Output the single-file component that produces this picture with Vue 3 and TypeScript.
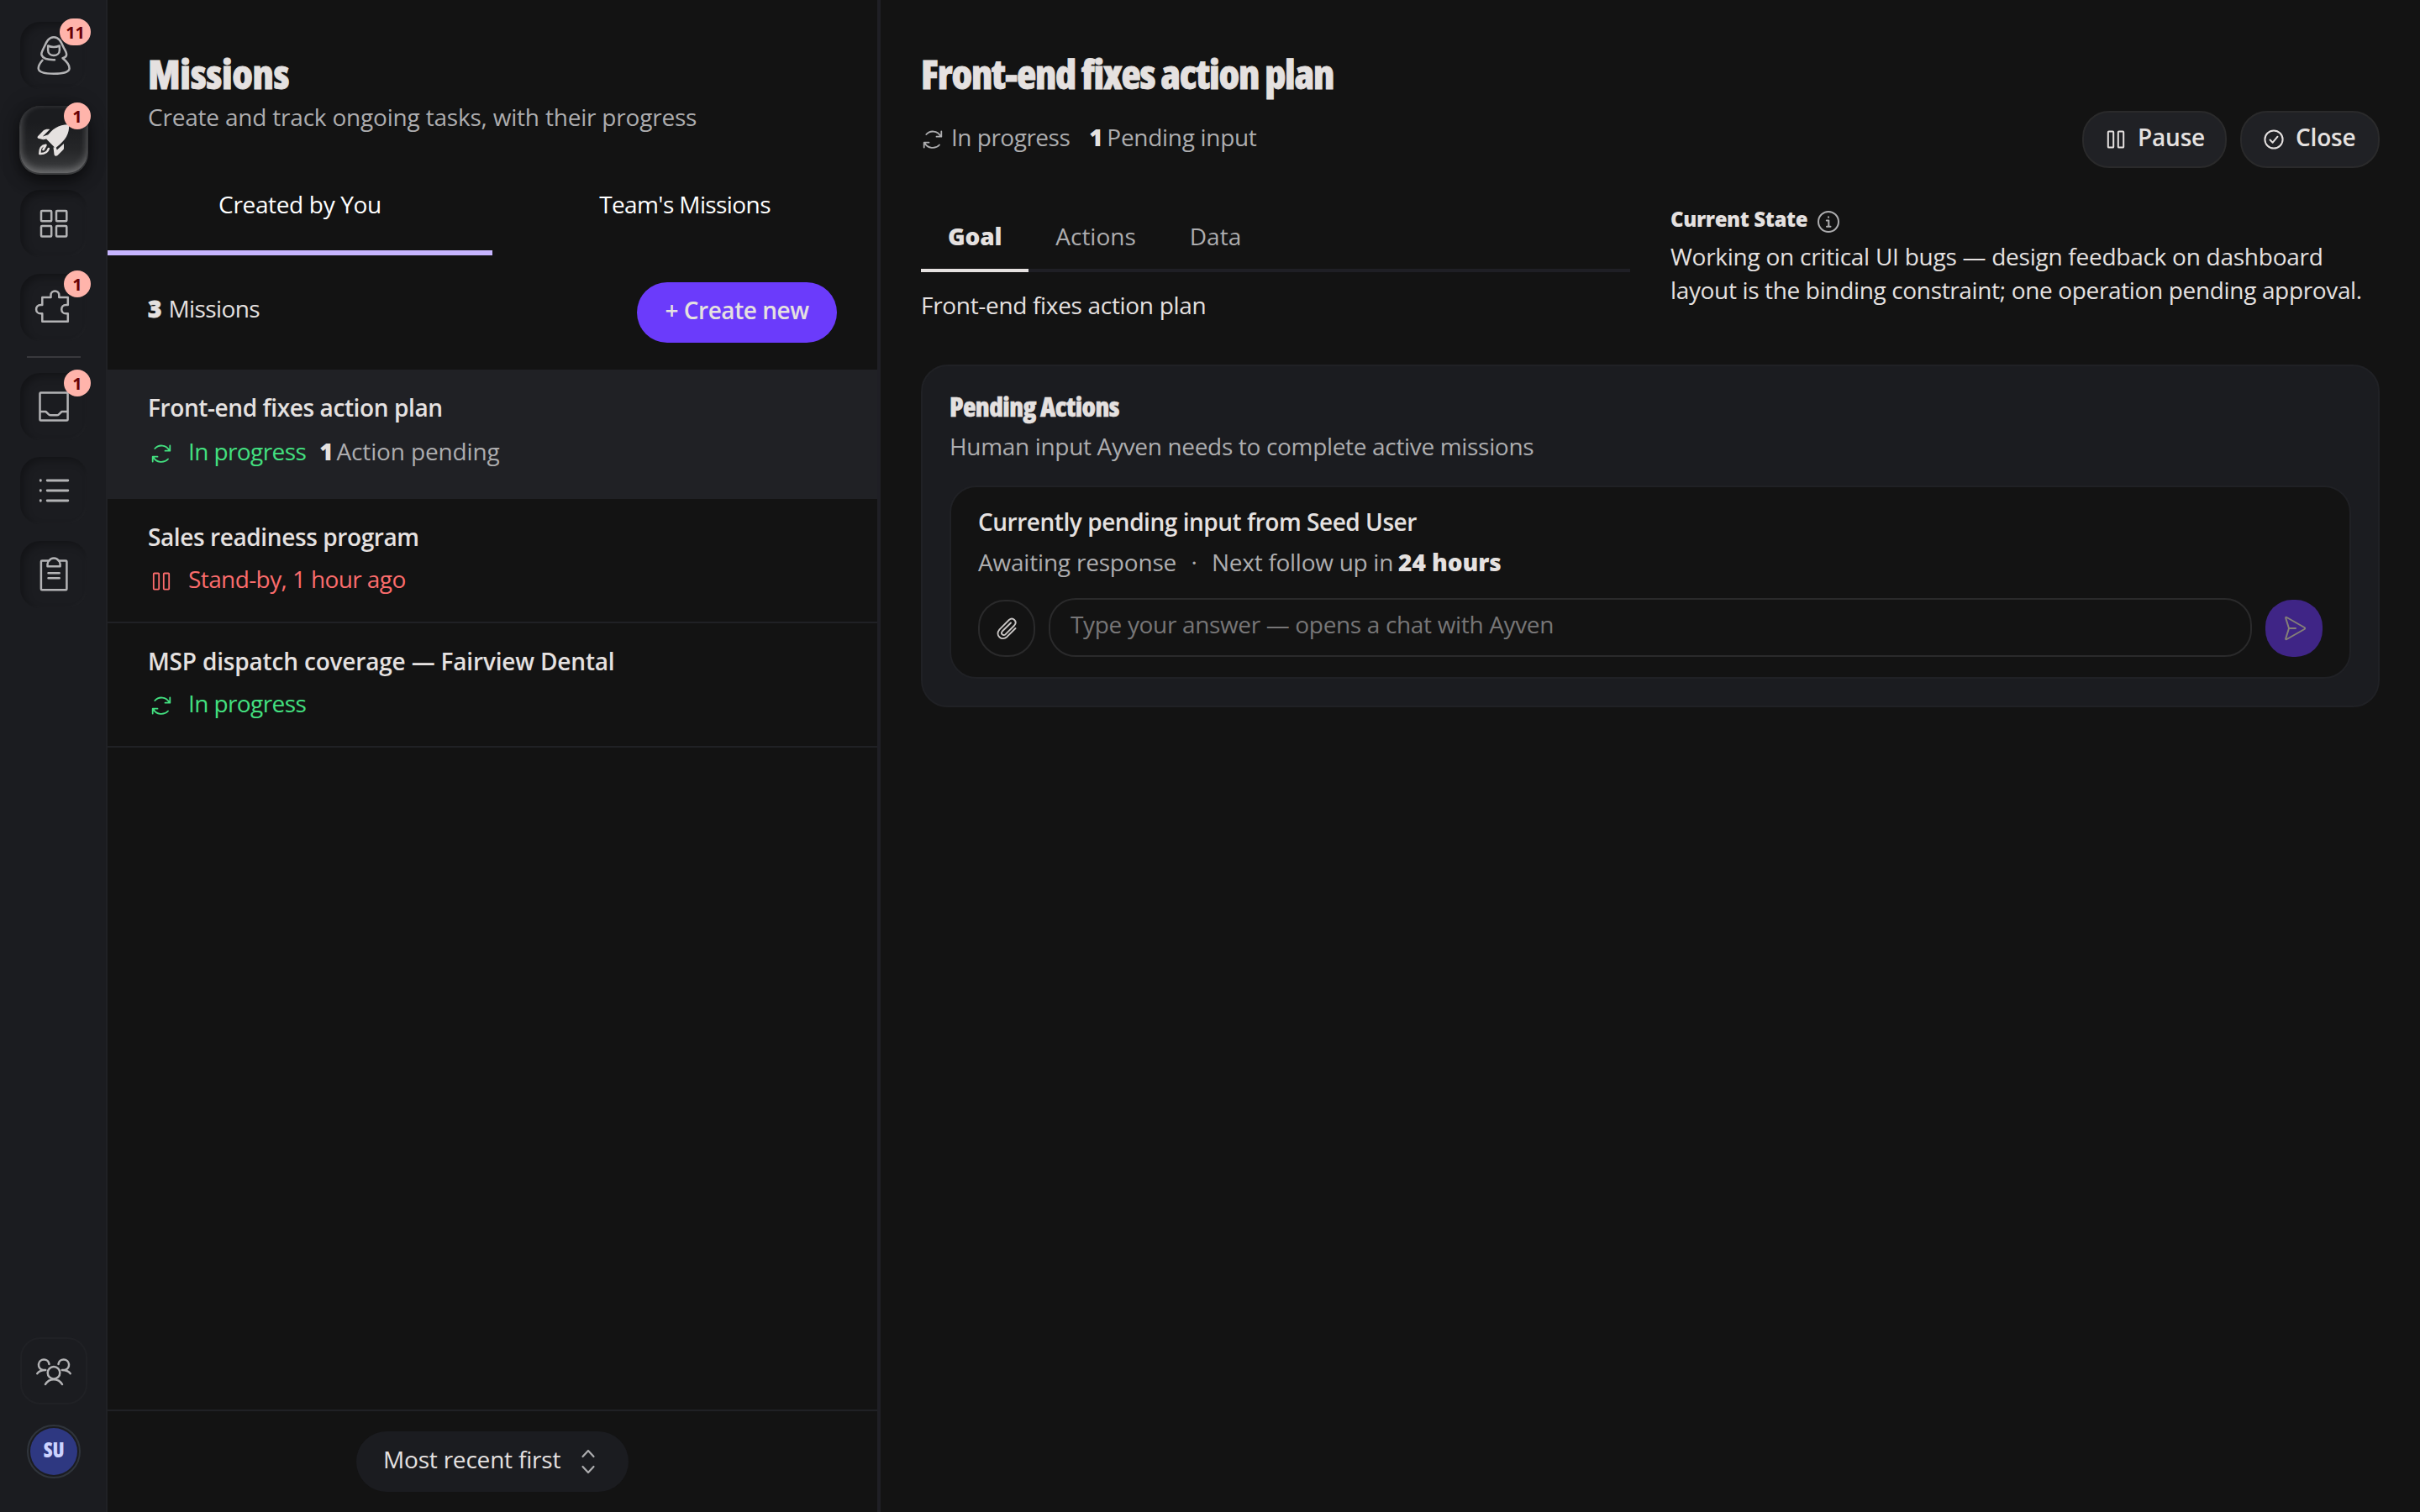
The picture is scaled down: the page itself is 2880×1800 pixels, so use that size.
<script setup lang="ts">
interface NavItem {
  id: string
  badge?: string
  active?: boolean
}

interface Mission {
  title: string
  status: string
  state: 'running' | 'standby'
  pending?: number
}

const primaryNav: NavItem[] = [
  { id: 'agent', badge: '11' },
  { id: 'missions', badge: '1', active: true },
  { id: 'apps' },
  { id: 'integrations', badge: '1' },
]

const secondaryNav: NavItem[] = [
  { id: 'inbox', badge: '1' },
  { id: 'list' },
  { id: 'clipboard' },
]

const icons: Record<string, string> = {
  agent:
    'M41 45.2C33 45.4 27 43.5 25.5 39.5C24.6 36.5 27 33.6 28.8 29.5C31.3 23.6 34 18.2 40 18.2S48.700 23.600 51.200 29.500C53 33.600 56 37 55 40C54.200 42 52.500 42.800 50.500 43.300C54.500 46.500 58.700 51.500 58.600 55.500C58.400 60 49.500 61.800 40 61.800S21.800 60 21.700 55.300C21.600 51.500 24.500 48 26.500 45.700 M33.200 28.500C37.500 30.300 42.500 30.300 46.800 28.500L46.900 33.500C46.900 37.800 43.500 40 40 40S33.100 37.800 33.100 33.500Z',
  apps: 'M26 24.900H36.200Q37.200 24.900 37.200 25.900V36.200Q37.200 37.200 36.200 37.200H26Q25 37.200 25 36.200V25.900Q25 24.900 26 24.900ZM44 24.900H54.200Q55.300 24.900 55.300 25.900V36.200Q55.300 37.200 54.200 37.200H44Q43 37.200 43 36.200V25.900Q43 24.900 44 24.900ZM26 43H36.200Q37.200 43 37.200 44V54.400Q37.200 55.400 36.200 55.400H26Q25 55.400 25 54.400V44Q25 43 26 43ZM44 43H54.200Q55.300 43 55.300 44V54.400Q55.300 55.400 54.200 55.400H44Q43 55.400 43 54.400V44Q43 43 44 43Z',
  integrations:
    'M26.300 28H36.500V25.300C36.500 18.800 46.300 18.800 46.300 25.300V28H56.800V37H54.500C47.500 37 47.500 47.300 54.500 47.300H56.800V56.800H26.300V47.300H24.500C17.300 47.300 17.300 37 24.500 37H26.300Z',
  inbox:
    'M24.500 23.500H55.500Q56.600 23.500 56.600 24.500V55.500Q56.600 56.600 55.500 56.600H24.500Q23.500 56.600 23.500 55.500V24.500Q23.500 23.500 24.500 23.500ZM23.500 46H30.500L34 49.300Q35 50.300 36.300 50.300H43.700Q45 50.300 46 49.300L49.500 46H56.500',
  list: 'M32.200 28H56.800M32.200 40H56.800M32.200 52H56.800M24.300 27.700V28.300M24.300 39.700V40.300M24.300 51.700V52.300',
  clipboard:
    'M34 23.400H26Q24.900 23.400 24.900 24.400V57.200Q24.900 58.200 26 58.200H54.300Q55.400 58.200 55.400 57.200V24.400Q55.400 23.400 54.300 23.400H46.200M32.500 30.200V27.500Q32.500 24.800 34.800 23.300C36.500 19.500 43.700 19.500 45.400 23.300Q47.600 24.800 47.600 27.500V30.200ZM33.500 38.300H46.700M33.500 44.300H46.700',
  team: 'M47.300 42.300A7.300 7.300 0 1 1 32.700 42.300A7.300 7.300 0 1 1 47.300 42.300M30 56C34.500 48.200 45.500 48.200 50 56M34.500 32A6.300 6.300 0 1 0 27 38.900L30.200 38.900C26 38.900 22 40.500 20.300 43.200M45.500 32A6.300 6.300 0 1 1 53 38.900L49.800 38.900C54 38.900 58 40.500 59.700 43.200',
}

const refreshPath =
  'M8.300 10C13 4.800 21.500 5.300 25.700 12.300M26.300 6.500V12.700H20.500M5.700 25.500V19.700H11.500M6.300 20C10 27 19 27.800 24 22.500'
const pausePath =
  'M7.700 6.500H12.300Q13.200 6.500 13.200 7.400V24.700Q13.200 25.600 12.300 25.600H7.700Q6.800 25.600 6.800 24.700V7.400Q6.800 6.500 7.700 6.500ZM19.700 6.500H24.300Q25.200 6.500 25.200 7.400V24.700Q25.200 25.600 24.300 25.600H19.700Q18.800 25.600 18.800 24.700V7.400Q18.800 6.500 19.700 6.500Z'

const missions: Mission[] = [
  { title: 'Front-end fixes action plan', status: 'In progress', state: 'running', pending: 1 },
  { title: 'Sales readiness program', status: 'Stand-by, 1 hour ago', state: 'standby' },
  { title: 'MSP dispatch coverage — Fairview Dental', status: 'In progress', state: 'running' },
]
</script>

<template>
  <div class="app">
    <aside class="rail">
      <nav class="rail-group">
        <button v-for="item in primaryNav" :key="item.id" class="tile" :class="{ active: item.active }">
          <svg v-if="item.id === 'missions'" class="tile-icon" viewBox="0 0 80 80">
            <g fill="#e5e1e0">
              <path d="M58 22.300C59 33 54 41 43 49.500C42.300 50 41.800 50.300 41.300 49.800L31.200 39.500C30.500 38.800 30.500 38.200 31 37.500C38 27.500 46 22 58 22.300Z" />
              <path d="M35.300 28L27 36.300L27.500 40.200L21.500 38.800C20.300 38.300 20.300 37 21.200 36L27.500 29.500C29.300 28 32 27.600 35.300 28Z" />
              <path d="M26.800 36.500L33.500 34.300L31 39.500L27.300 40.200Z" />
              <path d="M52 45V50.500Q51.900 51.800 51 52.600L44.500 59C43 60.300 41 60 40.500 58L39.500 49.500L42.500 49L43.800 52.500Z" />
            </g>
            <path d="M30.500 46.800C24.500 47.500 23.200 51 23.300 57C29 57.300 32.500 55.500 33.800 51M30.500 46.800L27.500 52" fill="none" stroke="#e5e1e0" stroke-width="2.600" stroke-linecap="round" stroke-linejoin="round" />
          </svg>
          <svg v-else class="tile-icon line" viewBox="0 0 80 80"><path :d="icons[item.id]" /></svg>
          <span v-if="item.badge" class="badge">{{ item.badge }}</span>
        </button>
        <hr class="rail-divider" />
        <button v-for="item in secondaryNav" :key="item.id" class="tile">
          <svg class="tile-icon line" :class="{ thick: item.id === 'list' }" viewBox="0 0 80 80"><path :d="icons[item.id]" /></svg>
          <span v-if="item.badge" class="badge">{{ item.badge }}</span>
        </button>
      </nav>
      <div class="rail-bottom">
        <button class="tile outlined">
          <svg class="tile-icon line" viewBox="0 0 80 80"><path :d="icons.team" /></svg>
        </button>
        <div class="avatar"><span>SU</span></div>
      </div>
    </aside>

    <section class="list-panel">
      <header class="list-head">
        <h1 class="title">Missions</h1>
        <p class="muted t-sub">Create and track ongoing tasks, with their progress</p>
      </header>
      <div class="list-tabs">
        <button class="list-tab selected"><span>Created by You</span></button>
        <button class="list-tab"><span class="t-team">Team's Missions</span></button>
      </div>
      <div class="list-bar">
        <p class="t-count"><b>3</b> Missions</p>
        <button class="create"><span>+ Create new</span></button>
      </div>
      <ul class="missions">
        <li v-for="(m, i) in missions" :key="m.title" class="mission" :class="{ current: i === 0 }">
          <h2 class="mission-title">{{ m.title }}</h2>
          <div class="mission-status" :class="m.state">
            <svg class="status-icon" viewBox="0 0 32 32"><path :d="m.state === 'running' ? refreshPath : pausePath" /></svg>
            <span class="status-text">{{ m.status }}</span>
            <span v-if="m.pending" class="pending"><b>{{ m.pending }}</b> Action pending</span>
          </div>
        </li>
      </ul>
      <footer class="list-foot">
        <button class="sort">
          <span>Most recent first</span>
          <svg class="sort-icon" viewBox="0 0 28 36"><path d="M7.500 12L14 5L20.500 12M7.500 24L14 31L20.500 24" /></svg>
        </button>
      </footer>
    </section>

    <main class="detail">
      <h1 class="title t-plan">Front-end fixes action plan</h1>
      <div class="detail-bar">
        <div class="detail-status">
          <svg class="status-icon" viewBox="2 0 28 32"><path :d="refreshPath" /></svg>
          <span class="t-prog">In progress</span>
          <span class="detail-pending"><b>1</b> Pending input</span>
        </div>
        <div class="detail-actions">
          <button class="pill pause">
            <svg class="pill-icon" viewBox="0 0 32 32"><path :d="pausePath" /></svg>
            <span>Pause</span>
          </button>
          <button class="pill close">
            <svg class="pill-icon" viewBox="0 0 32 32"><circle cx="16" cy="16" r="10.600" /><path d="M11.500 16.500L14.700 19.700L20.500 12.700" /></svg>
            <span>Close</span>
          </button>
        </div>
      </div>

      <div class="columns">
        <div class="column">
          <div class="tabs">
            <button class="tab selected">Goal</button>
            <button class="tab">Actions</button>
            <button class="tab">Data</button>
          </div>
          <p class="goal-text">Front-end fixes action plan</p>
        </div>
        <div class="column">
          <h3 class="state-title">
            <span>Current State</span>
            <svg class="info-icon" viewBox="0 0 32 32"><circle cx="16" cy="16" r="12" /><path d="M13.800 14.500H16.300V21.500M16 10.300V10.700M14 21.700H18.500" /></svg>
          </h3>
          <p><span class="line-a">Working on critical UI bugs — design feedback on dashboard</span><br /><span class="line-b">layout is the binding constraint; one operation pending approval.</span></p>
        </div>
      </div>

      <section class="card">
        <h2 class="card-title">Pending Actions</h2>
        <p class="muted t-human">Human input Ayven needs to complete active missions</p>
        <article class="request">
          <h3 class="request-title">Currently pending input from Seed User</h3>
          <p class="muted request-meta">
            <span>Awaiting response</span><span class="dot">·</span><span class="t-next">Next follow up in</span><b>24 hours</b>
          </p>
          <div class="reply">
            <button class="round">
              <svg class="clip" viewBox="0 0 32 36"><path d="M26.500 18L16.300 28.200C10.500 33.500 1.500 26.500 7.500 19.300L18.800 8C23.300 4.300 29.300 9.500 25.200 14.500L14.600 25.200C11.800 27.500 8.500 24.500 10.800 21.500L21 11.500" /></svg>
            </button>
            <div class="field"><span>Type your answer — opens a chat with Ayven</span></div>
            <button class="round send">
              <svg viewBox="0 0 68 68"><path d="M24.200 21.800C24 21 24.700 20.600 25.400 21L46.500 33C47.300 33.500 47.300 34.500 46.500 35L25.400 47C24.700 47.400 24 47 24.200 46.200L28 34ZM28 34H36" /></svg>
            </button>
          </div>
        </article>
      </section>
    </main>
  </div>
</template>

<style>
body {
  background: #131313;
}
</style>

<style scoped>
* {
  box-sizing: border-box;
}
h1,
h2,
h3,
p,
ul {
  margin: 0;
  padding: 0;
  list-style: none;
}
button {
  appearance: none;
  border: 0;
  padding: 0;
  background: none;
  color: inherit;
  font: inherit;
  letter-spacing: inherit;
}
svg {
  display: block;
  flex: none;
  fill: none;
  stroke: currentColor;
  stroke-linecap: round;
  stroke-linejoin: round;
}
b {
  font-weight: 800;
  color: #e5e1e0;
}
.app {
  display: flex;
  width: 2880px;
  height: 1800px;
  overflow: hidden;
  background: #131313;
  color: #e5e1e0;
  font-family: 'Open Sans', 'Noto Sans', sans-serif;
  font-size: 28px;
  line-height: 40px;
  letter-spacing: -0.2px;
  white-space: nowrap;
}

/* Navigation rail */
.rail {
  display: flex;
  flex: none;
  flex-direction: column;
  justify-content: space-between;
  align-items: center;
  width: 128px;
  padding: 26px 0 40px 2px;
  border-right: 2px solid #202125;
  background: #1b1c20;
}
.rail-group {
  display: flex;
  flex-direction: column;
  align-items: center;
  gap: 20px;
}
.rail-divider {
  width: 64px;
  height: 2px;
  margin: -2px 0;
  border: 0;
  background: #39393d;
}
.tile {
  position: relative;
  width: 80px;
  height: 80px;
  border-radius: 24px;
  color: #b3b3b5;
  box-shadow: inset 4px 4px 10px rgba(0, 0, 0, 0.3), inset -2px -2px 4px rgba(255, 255, 255, 0.02);
}
.tile.active {
  background: linear-gradient(180deg, #1b1c1f 25%, #252628 65%, #3c3d3f 100%);
  box-shadow:
    0 1px 0 1px #3a3b3d,
    0 10px 18px rgba(0, 0, 0, 0.5),
    0 0 24px rgba(0, 0, 0, 0.35),
    inset 0 -3px 8px rgba(255, 255, 255, 0.2),
    inset 0 -4px 12px rgba(255, 255, 255, 0.12);
}
.tile.outlined {
  border: 2px solid #202125;
  box-shadow: none;
}
.tile-icon {
  width: 80px;
  height: 80px;
  stroke: none;
}
.outlined .tile-icon {
  margin: -2px;
}
.tile-icon.line {
  stroke: currentColor;
  stroke-width: 2.5;
}
.tile-icon.thick {
  stroke-width: 2.9;
}
.badge {
  position: absolute;
  top: -4px;
  right: -4px;
  min-width: 32px;
  height: 32px;
  padding: 0 7px;
  border-radius: 16px;
  background: #ffb4ab;
  color: #690005;
  font: 700 20px/34px 'Open Sans', sans-serif;
  letter-spacing: 0;
  text-align: center;
}
.rail-bottom {
  display: flex;
  flex-direction: column;
  align-items: center;
  gap: 24px;
}
.avatar {
  display: flex;
  width: 64px;
  height: 64px;
  padding: 2px;
  border: 2px solid #30353c;
  border-radius: 50%;
}
.avatar span {
  flex: 1;
  border-radius: 50%;
  background: #2e3881;
  color: #ccd3ff;
  font-size: 24px;
  font-weight: 800;
  font-stretch: 75%;
  line-height: 52px;
  text-align: center;
}

/* Mission list */
.list-panel {
  display: flex;
  flex: none;
  flex-direction: column;
  width: 920px;
  border-right: 4px solid #1f1f25;
}
.list-head {
  padding: 61px 48px 0;
}
.title {
  font-size: 48px;
  font-weight: 800;
  font-stretch: 75%;
  line-height: 54px;
  letter-spacing: -0.4px;
  -webkit-text-stroke: 0.8px currentColor;
}
.t-plan {
  letter-spacing: -1.27px;
}
.muted {
  color: #adadaf;
}
.t-sub {
  margin-top: 4px;
}
.list-tabs {
  display: flex;
  height: 116px;
  margin-top: 29px;
  color: #fff;
  letter-spacing: -0.34px;
}
.list-tab {
  flex: 1;
  border-bottom: 6px solid transparent;
}
.list-tab.selected {
  border-bottom-color: #c7b5ff;
}
.t-team {
  letter-spacing: -0.6px;
}
.list-bar {
  display: flex;
  justify-content: space-between;
  align-items: center;
  height: 136px;
  padding: 0 48px;
}
.t-count {
  padding-bottom: 10px;
  letter-spacing: -0.6px;
}
.t-count b {
  margin-right: 2px;
  -webkit-text-stroke: 0.8px currentColor;
}
.create {
  width: 238px;
  height: 72px;
  padding-bottom: 6px;
  border-radius: 36px;
  background: #6b3bfb;
  font-weight: 600;
  letter-spacing: -0.48px;
}
.mission {
  height: 148px;
  padding: 25px 48px 0;
  border-bottom: 2px solid #202125;
}
.mission.current {
  height: 154px;
  background: #202125;
}
.mission-title,
.request-title {
  font-size: 28px;
  font-weight: 600;
  line-height: 40px;
  letter-spacing: -0.4px;
}
.mission:last-child .mission-title {
  letter-spacing: -0.18px;
}
.request-title {
  letter-spacing: -0.46px;
}
.mission-status {
  display: flex;
  align-items: center;
  height: 40px;
  margin-top: 10px;
}
.current .mission-status {
  margin-top: 12px;
}
.running {
  color: #43e080;
}
.standby {
  color: #fb6c6c;
}
.status-icon {
  width: 32px;
  height: 32px;
  margin: 6px 16px 0 0;
  stroke-width: 1.8;
}
.status-text {
  letter-spacing: -0.6px;
}
.pending {
  margin-left: 16px;
  color: #adadaf;
  letter-spacing: -0.15px;
}
.pending b {
  margin-right: -3px;
}
.list-foot {
  display: flex;
  justify-content: center;
  align-items: center;
  height: 122px;
  margin-top: auto;
  border-top: 2px solid #202125;
}
.sort {
  display: flex;
  justify-content: space-between;
  align-items: center;
  width: 324px;
  height: 72px;
  padding: 0 34px 0 32px;
  border-radius: 36px;
  background: #1b1c20;
}
.sort span {
  padding-bottom: 6px;
}
.sort-icon {
  width: 28px;
  height: 36px;
  stroke: #adadaf;
  stroke-width: 2.2;
}

/* Mission detail */
.detail {
  flex: 1;
  min-width: 0;
  padding: 61px 48px 0;
}
.detail-bar {
  display: flex;
  justify-content: space-between;
  align-items: center;
  height: 68px;
  margin-top: 17px;
}
.detail-status {
  display: flex;
  align-items: center;
  padding-bottom: 6px;
  color: #adadaf;
}
.detail-status .status-icon {
  width: 28px;
  margin-right: 8px;
}
.t-prog {
  letter-spacing: -0.5px;
}
.detail-pending {
  margin-left: 23px;
  letter-spacing: -0.3px;
}
.detail-pending b {
  margin-right: -2px;
}
.detail-actions {
  display: flex;
  gap: 16px;
}
.pill {
  display: flex;
  align-items: center;
  height: 68px;
  padding: 0 0 0 22px;
  border: 2px solid #2a2a2b;
  border-radius: 32px;
  background: #202125;
  font-weight: 600;
}
.pill.pause {
  width: 172px;
}
.pill.close {
  width: 166px;
}
.pill span {
  padding-bottom: 6px;
}
.pill-icon {
  width: 32px;
  height: 32px;
  margin-right: 10px;
  stroke-width: 2;
}
.columns {
  display: grid;
  grid-template-columns: 1fr 1fr;
  gap: 48px;
  height: 192px;
  margin-top: 42px;
}
.tabs {
  display: flex;
  height: 82px;
  margin-bottom: 19px;
  box-shadow: inset 0 -4px #1f1f25;
}
.tab {
  padding: 0 32px;
  border-bottom: 4px solid transparent;
  color: #adadaf;
  letter-spacing: 0;
}
.tab.selected {
  border-bottom-color: #e5e1e0;
  color: #e5e1e0;
  font-weight: 800;
  letter-spacing: -0.2px;
}
.goal-text {
  letter-spacing: -0.32px;
}
.state-title {
  display: flex;
  align-items: center;
  height: 36px;
  margin: 1px 0 6px;
  font-size: 24px;
  font-weight: 800;
  letter-spacing: -0.38px;
}
.info-icon {
  width: 32px;
  height: 32px;
  margin: 6px 0 0 9px;
  stroke: #adadaf;
  stroke-width: 2;
}
.line-a {
  letter-spacing: -0.26px;
}
.line-b {
  letter-spacing: -0.35px;
}
.card {
  height: 408px;
  padding: 32px;
  border: 2px solid #202125;
  border-radius: 32px;
  background: #1b1c20;
}
.card-title {
  font-size: 32px;
  font-weight: 800;
  font-stretch: 75%;
  line-height: 32px;
  letter-spacing: -0.6px;
  -webkit-text-stroke: 0.5px currentColor;
}
.t-human {
  margin: 11px 0 27px;
  letter-spacing: -0.33px;
}
.request {
  height: 230px;
  padding: 21px 32px 0;
  border: 2px solid #202125;
  border-radius: 32px;
  background: #131313;
}
.request-meta {
  display: flex;
  margin: 8px 0 23px;
}
.dot {
  width: 42px;
  text-align: center;
}
.t-next {
  letter-spacing: -0.28px;
}
.request-meta b {
  margin-left: 6px;
  letter-spacing: -0.06px;
}
.reply {
  display: flex;
  align-items: flex-end;
  gap: 16px;
}
.round {
  display: flex;
  flex: none;
  justify-content: center;
  align-items: center;
  width: 68px;
  height: 68px;
  border: 2px solid #2a2a2b;
  border-radius: 32px;
}
.clip {
  width: 32px;
  height: 36px;
  stroke: #c9c6c5;
  stroke-width: 1.9;
}
.field {
  flex: 1;
  height: 70px;
  padding: 9px 24px 0;
  border: 2px solid #2a2a2b;
  border-radius: 32px;
  color: #777677;
  letter-spacing: -0.34px;
}
.send {
  border: 0;
  background: #3f2586;
}
.send svg {
  width: 68px;
  height: 68px;
  stroke: #858078;
  stroke-width: 2;
}
</style>
